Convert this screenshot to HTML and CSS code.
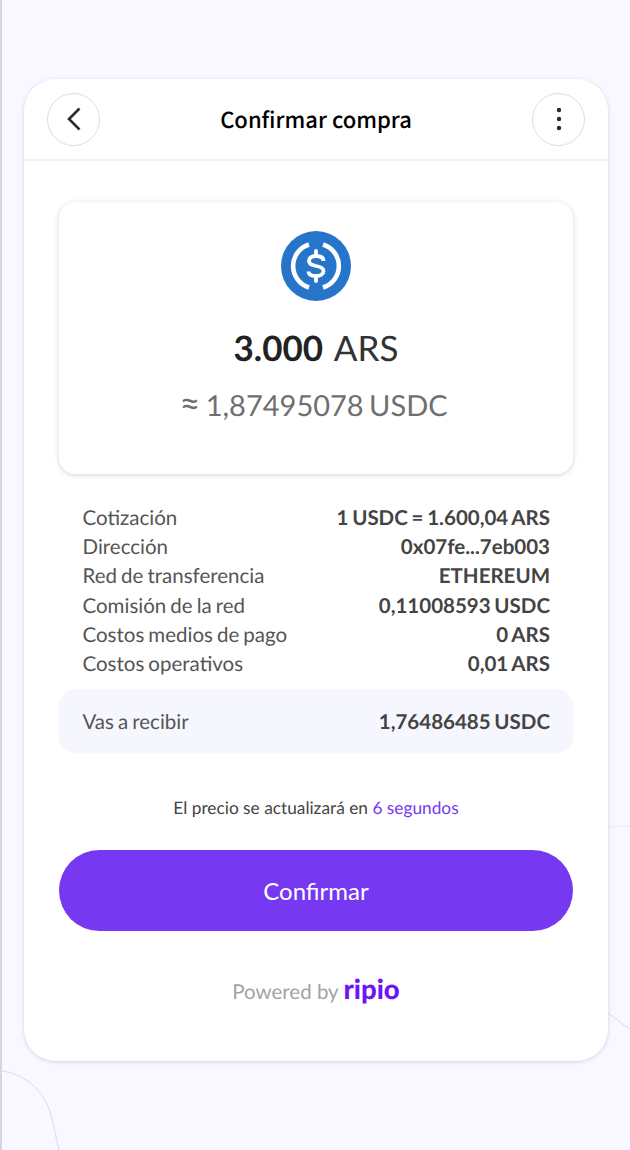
FILE: index.html
```html
<!DOCTYPE html>
<html lang="en">

<head>
    <meta charset="UTF-8">
    <title>Confirmar compra</title>
    <link rel="stylesheet" href="styles.css">
</head>

<body>
    <!-- lineas de fondo -->
    <svg class="bg-lines" width="630" height="1150" viewBox="0 0 630 1150" fill="none">
        <path d="M2 1071C28 1075 44 1092 50 1112C54 1126 56 1138 59 1150" stroke="#dcd6fb" />
        <path d="M608 827C615 827 622 826 630 826" stroke="#ebe8fb" />
        <path d="M608 1013C615 1018 622 1024 630 1029" stroke="#dcd6fb" />
    </svg>

    <div class="card">
        <div class="header">
            <button class="round-btn">
                <svg width="16" height="26" viewBox="0 0 16 26" fill="none">
                    <path d="M13.5 2.500L3 13L13.500 23.500" stroke="#2b2b2b" stroke-width="2.6" />
                </svg>
            </button>
            <h1 class="title">Confirmar compra</h1>
            <button class="round-btn">
                <svg width="6" height="24" viewBox="0 0 6 24" fill="#2b2b2b">
                    <circle cx="3" cy="3" r="2.2" />
                    <circle cx="3" cy="12" r="2.2" />
                    <circle cx="3" cy="21" r="2.2" />
                </svg>
            </button>
        </div>

        <div class="content">
            <div class="amount-box">
                <svg class="coin" width="70" height="70" viewBox="0 0 70 70">
                    <circle cx="35" cy="35" r="35" fill="#2775ca" />
                    <path d="M28 13.500A22.500 22.500 0 0 0 28 56.500" fill="none" stroke="#fff" stroke-width="4.6" />
                    <path d="M42 13.500A22.500 22.500 0 0 1 42 56.500" fill="none" stroke="#fff" stroke-width="4.6" />
                    <path d="M42.500 30C42.500 26.500 39.500 25 35 25C30.500 25 28 27 28 30C28 33 30.500 34.200 35 35C39.500 35.800 42.500 37 42.500 40C42.500 43 39.500 45 35 45C30.500 45 27.500 43.500 27.500 40.500" fill="none" stroke="#fff" stroke-width="3.8" />
                    <path d="M35 20V25M35 45V50" stroke="#fff" stroke-width="3.8" stroke-linecap="round" />
                </svg>
                <div class="amount"><b>3.000</b> ARS</div>
                <div class="amount-alt"><span class="approx">≈</span> 1,87495078 USDC</div>
            </div>

            <ul class="details">
                <li><span>Cotización</span><b>1 USDC = 1.600,04 ARS</b></li>
                <li><span>Dirección</span><b>0x07fe...7eb003</b></li>
                <li><span>Red de transferencia</span><b>ETHEREUM</b></li>
                <li><span>Comisión de la red</span><b>0,11008593 USDC</b></li>
                <li><span>Costos medios de pago</span><b>0 ARS</b></li>
                <li><span>Costos operativos</span><b>0,01 ARS</b></li>
            </ul>

            <div class="receive">
                <span>Vas a recibir</span><b>1,76486485 USDC</b>
            </div>

            <p class="timer">El precio se actualizará en <span class="timer-secs">6 segundos</span></p>

            <button class="confirm">Confirmar</button>

            <div class="powered">Powered by <span class="ripio">ripio</span></div>
        </div>
    </div>
</body>

</html>
```

FILE: styles.css
```css
* {
    padding: 0;
    margin: 0;
    box-sizing: border-box;
    list-style: none;
}

html {
    background: #f9f7ff;
}

body {
    position: relative;
    height: 1150px;
    overflow: hidden;
    padding: 79px 22px 0 22px;
    border-left: 2px solid #d5d6e2;
    font-family: Lato, "Liberation Sans", sans-serif;
    text-rendering: geometricPrecision;
    color: #555;
}

.bg-lines {
    position: absolute;
    left: -2px;
    top: 0;
}

.card {
    position: relative;
    height: 982px;
    background: #fff;
    border-radius: 32px;
    box-shadow: 0 1px 4px rgba(60, 50, 110, 0.18);
}

.header {
    display: flex;
    align-items: center;
    justify-content: space-between;
    height: 82px;
    padding: 2px 23px 2px 23px;
    border-bottom: 2px solid #f1f1f5;
}

.round-btn {
    display: flex;
    align-items: center;
    justify-content: center;
    width: 53px;
    height: 53px;
    background: #fff;
    border: 1px solid #dcdce4;
    border-radius: 50%;
}

.title {
    font-family: "Noto Sans CJK SC", "Noto Sans", sans-serif;
    font-size: 22px;
    font-weight: 500;
    color: #000;
}

.content {
    padding: 41px 35px 0 35px;
}

.amount-box {
    display: flex;
    flex-direction: column;
    align-items: center;
    height: 272px;
    padding-top: 29px;
    border-radius: 16px;
    box-shadow: 0 1px 5px rgba(40, 40, 70, 0.2);
}

.amount {
    margin-top: 25px;
    font-size: 35px;
    line-height: 44px;
    color: #333;
}

.amount b {
    color: #222;
    font-weight: 700;
    margin-right: 3px;
}

.amount-alt {
    margin-top: 17px;
    padding-right: 5px;
    font-size: 29px;
    line-height: 38px;
    word-spacing: -2px;
    color: #6f6f6f;
}

.approx {
    font-size: 36px;
    line-height: 30px;
}

.details {
    margin-top: 30px;
    padding: 0 23px 0 23.500px;
}

.details li,
.receive {
    display: flex;
    justify-content: space-between;
    font-size: 20.500px;
    line-height: 29.200px;
    word-spacing: -1.200px;
}

.details b,
.receive b {
    color: #444;
    font-weight: 700;
}

.receive {
    align-items: center;
    height: 64px;
    margin-top: 10px;
    padding: 2px 23px 0 23.500px;
    background: #f6f7fe;
    border-radius: 16px;
}

.timer {
    margin-top: 43px;
    text-align: center;
    font-size: 17.300px;
    line-height: 24px;
    color: #444;
}

.timer-secs {
    color: #7638f0;
}

.confirm {
    display: block;
    width: 100%;
    height: 81px;
    margin-top: 30px;
    padding-bottom: 1px;
    background: #7638f0;
    border: 0;
    border-radius: 41px;
    font-family: inherit;
    font-size: 24px;
    color: #fff;
}

.powered {
    margin-top: 42px;
    text-align: center;
    font-size: 20.500px;
    line-height: 32px;
    color: #a3a3a3;
}

.ripio {
    font-size: 27.500px;
    font-weight: 900;
    color: #6f14f5;
}
```
